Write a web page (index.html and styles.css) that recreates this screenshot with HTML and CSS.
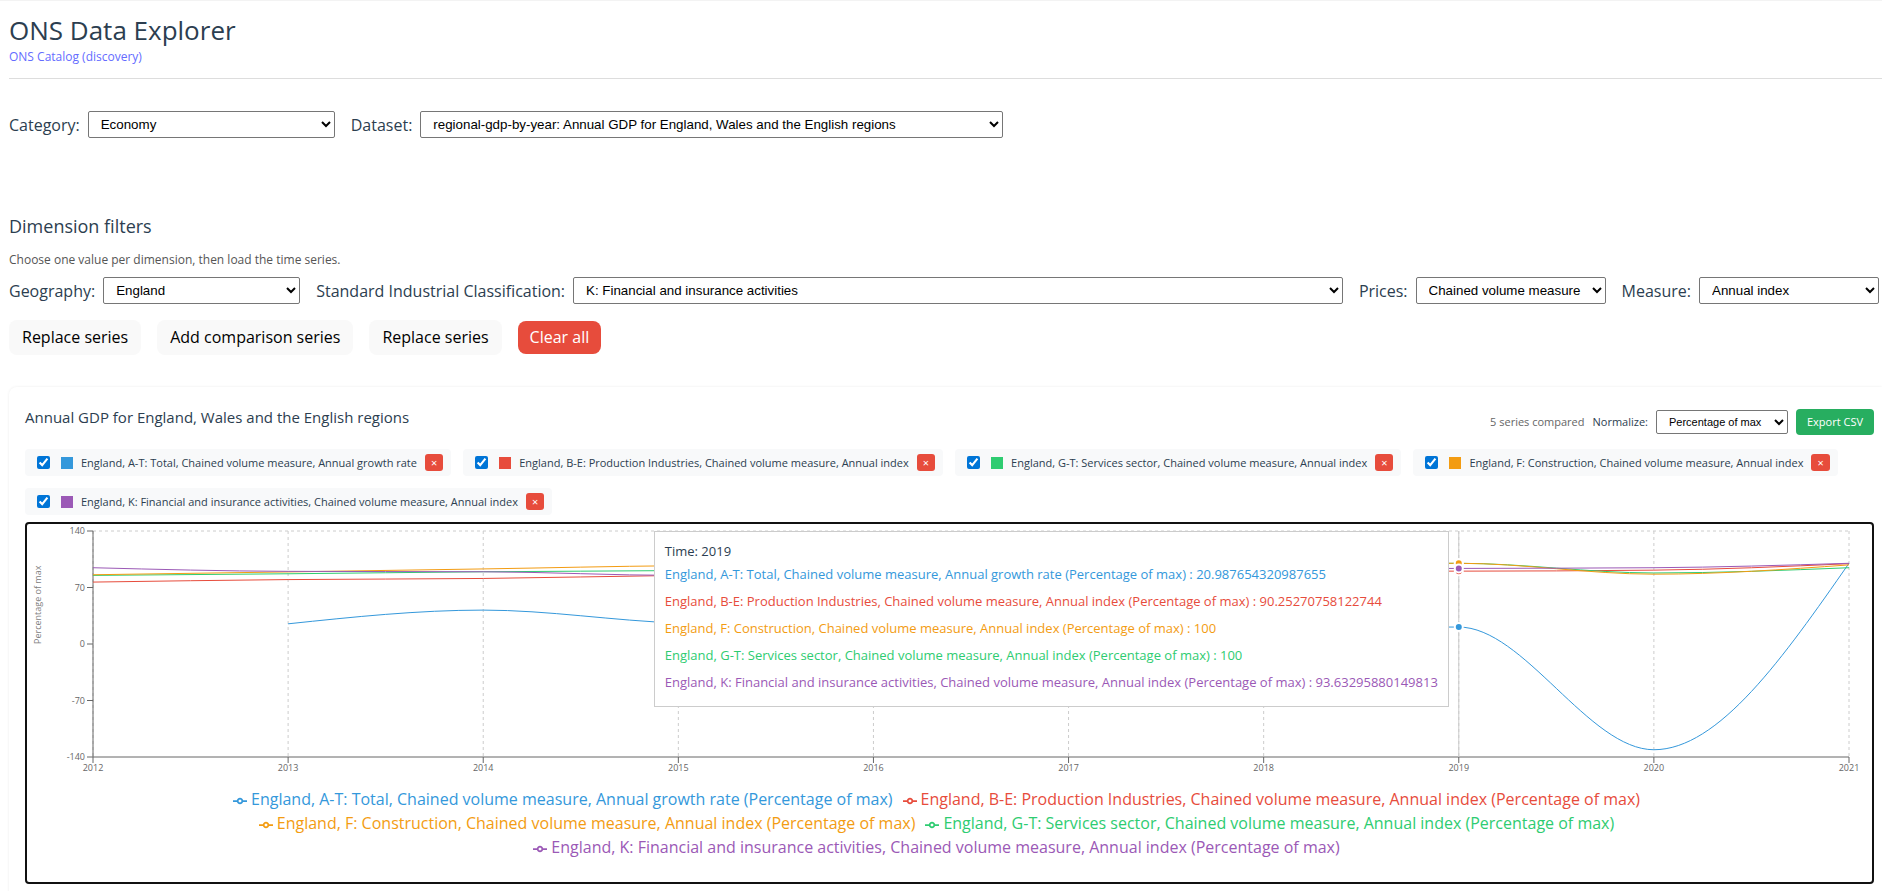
FILE: index.html
```html
<!DOCTYPE html>
<html lang="en">

<head>
    <meta charset="UTF-8">
    <meta name="viewport" content="width=device-width, initial-scale=1.0">
    <title>ONS Data Explorer</title>
    <link rel="stylesheet" href="styles.css">
</head>

<body>
    <header class="page-header">
        <h1>ONS Data Explorer</h1>
        <a href="#catalog">ONS Catalog (discovery)</a>
    </header>

    <main>
        <div class="row dataset-row">
            <label for="category">Category:</label>
            <select id="category" class="w-category">
                <option>Economy</option>
            </select>
            <label for="dataset">Dataset:</label>
            <select id="dataset" class="w-dataset">
                <option>regional-gdp-by-year: Annual GDP for England, Wales and the English regions</option>
            </select>
        </div>

        <section class="filters">
            <h2>Dimension filters</h2>
            <p class="hint">Choose one value per dimension, then load the time series.</p>
            <div class="row">
                <label for="geography">Geography:</label>
                <select id="geography" class="w-geography">
                    <option>England</option>
                </select>
                <label for="sic">Standard Industrial Classification:</label>
                <select id="sic" class="w-sic">
                    <option>K: Financial and insurance activities</option>
                </select>
                <label for="prices">Prices:</label>
                <select id="prices" class="w-prices">
                    <option>Chained volume measure</option>
                </select>
                <label for="measure">Measure:</label>
                <select id="measure" class="w-measure">
                    <option>Annual index</option>
                </select>
            </div>
            <div class="actions">
                <button type="button">Replace series</button>
                <button type="button">Add comparison series</button>
                <button type="button">Replace series</button>
                <button type="button" class="danger">Clear all</button>
            </div>
        </section>

        <section class="card">
            <div class="card-head">
                <h3>Annual GDP for England, Wales and the English regions</h3>
                <div class="tools">
                    <span class="count">5 series compared</span>
                    <label for="normalize">Normalize:</label>
                    <select id="normalize">
                        <option>Percentage of max</option>
                    </select>
                    <button type="button" class="export">Export CSV</button>
                </div>
            </div>

            <div class="chips">
                <div class="chip">
                    <input type="checkbox" id="s1" checked>
                    <span class="swatch blue"></span>
                    <label for="s1">England, A-T: Total, Chained volume measure, Annual growth rate</label>
                    <button type="button" aria-label="Remove">×</button>
                </div>
                <div class="chip">
                    <input type="checkbox" id="s2" checked>
                    <span class="swatch red"></span>
                    <label for="s2">England, B-E: Production Industries, Chained volume measure, Annual index</label>
                    <button type="button" aria-label="Remove">×</button>
                </div>
                <div class="chip">
                    <input type="checkbox" id="s3" checked>
                    <span class="swatch green"></span>
                    <label for="s3">England, G-T: Services sector, Chained volume measure, Annual index</label>
                    <button type="button" aria-label="Remove">×</button>
                </div>
                <div class="chip">
                    <input type="checkbox" id="s4" checked>
                    <span class="swatch orange"></span>
                    <label for="s4">England, F: Construction, Chained volume measure, Annual index</label>
                    <button type="button" aria-label="Remove">×</button>
                </div>
                <div class="chip">
                    <input type="checkbox" id="s5" checked>
                    <span class="swatch purple"></span>
                    <label for="s5">England, K: Financial and insurance activities, Chained volume measure, Annual index</label>
                    <button type="button" aria-label="Remove">×</button>
                </div>
            </div>

            <div class="chart">
                <svg class="plot"></svg>
                <ul class="legend"></ul>
                <div class="tooltip">
                    <p>Time: 2019</p>
                    <ul></ul>
                </div>
            </div>
        </section>
    </main>

    <script>
        let years = [2012, 2013, 2014, 2015, 2016, 2017, 2018, 2019, 2020, 2021];
        let series = [
            {
                name: 'England, A-T: Total, Chained volume measure, Annual growth rate (Percentage of max)',
                color: '#3498db', now: '20.987654320987655',
                values: [null, 25, 42, 26, 22, 24, 21, 20.99, -131, 100]
            },
            {
                name: 'England, B-E: Production Industries, Chained volume measure, Annual index (Percentage of max)',
                color: '#e74c3c', now: '90.25270758122744',
                values: [76.7, 79.8, 81.2, 85, 87, 89, 90.2, 90.25, 91.5, 99.5]
            },
            {
                name: 'England, F: Construction, Chained volume measure, Annual index (Percentage of max)',
                color: '#f39c12', now: '100',
                values: [85.8, 89.3, 93, 97, 98, 99, 99.8, 100, 86.5, 98]
            },
            {
                name: 'England, G-T: Services sector, Chained volume measure, Annual index (Percentage of max)',
                color: '#2ecc71', now: '100',
                values: [85, 87, 89.5, 91, 94, 96, 98, 100, 88, 94.5]
            },
            {
                name: 'England, K: Financial and insurance activities, Chained volume measure, Annual index (Percentage of max)',
                color: '#9b59b6', now: '93.63295880149813',
                values: [94.5, 90, 89.5, 85, 88, 91, 93, 93.63, 94.5, 100]
            }
        ];

        let plot = document.querySelector('.chart .plot');
        let tooltip = document.querySelector('.chart .tooltip');
        let legend = document.querySelector('.chart .legend');

        // green is painted under orange
        let order = [0, 1, 3, 2, 4];
        let box = { left: 66, right: 23, top: 7, height: 226 };
        let activeIndex = 7;

        function yPos(v) {
            return box.top + (140 - v) / 280 * box.height;
        }

        // monotone cubic through the points
        function curve(pts) {
            let n = pts.length;
            let s = [];
            let m = [];
            for (let i = 0; i < n - 1; i++) {
                s.push((pts[i + 1][1] - pts[i][1]) / (pts[i + 1][0] - pts[i][0]));
            }
            for (let i = 1; i < n - 1; i++) {
                let sign = Math.sign(s[i - 1]) + Math.sign(s[i]);
                m[i] = sign * Math.min(Math.abs(s[i - 1]), Math.abs(s[i]), Math.abs(s[i - 1] + s[i]) / 4);
            }
            m[0] = (3 * s[0] - m[1]) / 2;
            m[n - 1] = (3 * s[n - 2] - m[n - 2]) / 2;
            let d = `M${pts[0][0]},${pts[0][1]}`;
            for (let i = 0; i < n - 1; i++) {
                let dx = (pts[i + 1][0] - pts[i][0]) / 3;
                d += `C${pts[i][0] + dx},${pts[i][1] + dx * m[i]},${pts[i + 1][0] - dx},${pts[i + 1][1] - dx * m[i + 1]},${pts[i + 1][0]},${pts[i + 1][1]}`;
            }
            return d;
        }

        function draw() {
            let width = plot.clientWidth;
            let step = (width - box.left - box.right) / (years.length - 1);
            let x = i => box.left + i * step;
            let right = x(years.length - 1);
            let bottom = box.top + box.height;
            let out = '';

            years.forEach((year, i) => {
                out += `<line class="grid" x1="${x(i)}" y1="${box.top}" x2="${x(i)}" y2="${bottom}"/>`;
            });
            out += `<line class="grid" x1="${box.left}" y1="${box.top}" x2="${right}" y2="${box.top}"/>`;
            out += `<line class="axis" x1="${box.left}" y1="${bottom}" x2="${right}" y2="${bottom}"/>`;
            out += `<line class="axis" x1="${box.left}" y1="${box.top}" x2="${box.left}" y2="${bottom}"/>`;

            years.forEach((year, i) => {
                out += `<line class="axis" x1="${x(i)}" y1="${bottom}" x2="${x(i)}" y2="${bottom + 6}"/>`;
                out += `<text class="tick" x="${x(i)}" y="${bottom + 14}" text-anchor="middle">${year}</text>`;
            });
            [140, 70, 0, -70, -140].forEach(v => {
                out += `<line class="axis" x1="${box.left - 6}" y1="${yPos(v)}" x2="${box.left}" y2="${yPos(v)}"/>`;
                out += `<text class="tick" x="${box.left - 8}" y="${yPos(v) + 3}" text-anchor="end">${v}</text>`;
            });
            out += `<text class="axis-label" transform="translate(14 ${yPos(0)}) rotate(-90)">Percentage of max</text>`;

            out += `<line class="cursor" x1="${x(activeIndex)}" y1="${box.top}" x2="${x(activeIndex)}" y2="${bottom}"/>`;
            order.forEach(k => {
                let pts = [];
                series[k].values.forEach((v, i) => {
                    if (v !== null) pts.push([x(i), yPos(v)]);
                });
                out += `<path class="line" stroke="${series[k].color}" d="${curve(pts)}"/>`;
            });
            order.forEach(k => {
                out += `<circle class="dot" cx="${x(activeIndex)}" cy="${yPos(series[k].values[activeIndex])}" r="4" fill="${series[k].color}"/>`;
            });
            plot.innerHTML = out;

            tooltip.style.left = x(activeIndex) - tooltip.offsetWidth - 10 + 'px';
        }

        series.forEach(s => {
            legend.innerHTML += `<li style="color:${s.color}"><svg viewBox="0 0 32 32"><path d="M0,16h10.67A5.33,5.33,0,1,1,21.33,16H32M21.33,16A5.33,5.33,0,1,1,10.67,16"/></svg>${s.name}</li>`;
            tooltip.querySelector('ul').innerHTML += `<li style="color:${s.color}">${s.name} : ${s.now}</li>`;
        });

        draw();
        window.onresize = draw;
    </script>
</body>

</html>
```
FILE: styles.css
```css
* {
    box-sizing: border-box;
}

body {
    margin: 0;
    padding-left: 9px;
    border-top: 1px solid #f3f3f3;
    font-family: "Open Sans", "Noto Sans", sans-serif;
    font-size: 16px;
    line-height: 24px;
    color: #2c3e50;
    background-color: #fff;
    overflow: hidden;
}

h1,
h2,
h3,
p,
ul {
    margin: 0;
    padding: 0;
    font-weight: 400;
}

ul {
    list-style: none;
}

select {
    height: 27px;
    padding: 0 8px;
    border: 1px solid #767676;
    border-radius: 2px;
    font-family: "Liberation Sans", Arial, sans-serif;
    color: #000;
    background-color: #fff;
}

button {
    border: none;
    font-family: inherit;
    cursor: pointer;
}

.page-header {
    padding: 11px 0 12px;
    border-bottom: 1px solid #ddd;
}

.page-header h1 {
    font-size: 26px;
    line-height: 36px;
}

.page-header a {
    display: block;
    font-size: 12px;
    line-height: 18px;
    color: #646cff;
    text-decoration: none;
}

.row {
    display: flex;
    align-items: center;
}

.row label {
    margin-right: 8px;
    white-space: nowrap;
}

.row select {
    margin-right: 16px;
}

.row select:last-child {
    margin-right: 3px;
}

.dataset-row {
    padding-top: 32px;
}

.w-category {
    width: 247px;
}

.w-dataset {
    width: 583px;
}

.w-geography {
    width: 197px;
}

.w-sic {
    flex: 1;
    min-width: 0;
}

.w-prices {
    width: 190px;
}

.w-measure {
    width: 180px;
}

.filters {
    padding-top: 75px;
}

.filters h2 {
    font-size: 18px;
    line-height: 27px;
}

.filters .hint {
    padding: 11px 0 8px;
    font-size: 12px;
    line-height: 18px;
    color: #555;
}

.actions {
    display: flex;
    align-items: center;
    gap: 16px;
    margin-top: 16px;
}

.actions button {
    padding: 6px 13px;
    border-radius: 8px;
    font-size: 16px;
    line-height: 23px;
    color: #000;
    background-color: #f9f9f9;
}

.actions .danger {
    padding: 5px 12px;
    color: #fff;
    background-color: #e74c3c;
}

.card {
    margin-top: 32px;
    padding: 16px 8px 16px 16px;
    border-radius: 8px 0 0 8px;
    box-shadow: 0 0 3px rgba(0, 0, 0, 0.08);
}

.card-head {
    display: flex;
    justify-content: space-between;
    align-items: center;
    padding-top: 2px;
}

.card-head h3 {
    padding-bottom: 10px;
    font-size: 15px;
}

.tools {
    display: flex;
    align-items: center;
    gap: 8px;
    font-size: 11px;
}

.tools .count {
    color: #666;
}

.tools select {
    width: 132px;
    height: 24px;
    font-size: 11px;
}

.tools .export {
    padding: 4px 11px;
    border-radius: 4px;
    font-size: 11px;
    line-height: 18px;
    color: #fff;
    background-color: #27ae60;
}

.chips {
    display: flex;
    flex-wrap: wrap;
    gap: 12px;
    margin-top: 10px;
}

.chip {
    display: flex;
    align-items: center;
    height: 27px;
    padding: 0 8px 0 12px;
    border-radius: 4px;
    font-size: 11px;
    background-color: #f8f9fa;
}

.chip input {
    width: 13px;
    height: 13px;
    margin: 0 11px 0 0;
    accent-color: #0075d7;
}

.chip label {
    margin: 0 8px;
}

.chip button {
    padding: 0 6px;
    border-radius: 3px;
    font-size: 11px;
    line-height: 17px;
    color: #fff;
    background-color: #e74c3c;
}

.swatch {
    width: 12px;
    height: 12px;
}

.blue {
    background-color: #3498db;
}

.red {
    background-color: #e74c3c;
}

.green {
    background-color: #2ecc71;
}

.orange {
    background-color: #f39c12;
}

.purple {
    background-color: #9b59b6;
}

.chart {
    position: relative;
    margin-top: 7px;
    padding-bottom: 23px;
    border: 2px solid #111;
    border-radius: 4px;
}

.plot {
    display: block;
    width: 100%;
    height: 263px;
}

.plot .grid {
    stroke: #ccc;
    stroke-dasharray: 3 3;
}

.plot .axis {
    stroke: #666;
}

.plot .cursor {
    stroke: #ccc;
}

.plot .tick {
    font-size: 9px;
    fill: #666;
}

.plot .axis-label {
    font-size: 9px;
    fill: #808080;
}

.plot .line {
    fill: none;
    stroke-width: 1;
}

.plot .dot {
    stroke: #fff;
    stroke-width: 2;
}

.legend {
    padding-right: 16px;
    text-align: center;
}

.legend li {
    display: inline-block;
    margin-right: 10px;
}

.legend svg {
    width: 14px;
    height: 14px;
    margin-right: 4px;
    vertical-align: middle;
}

.legend path {
    fill: none;
    stroke: currentColor;
    stroke-width: 4;
}

.tooltip {
    position: absolute;
    top: 7px;
    padding: 10px;
    border: 1px solid #ccc;
    font-size: 13px;
    line-height: 19px;
    white-space: nowrap;
    background-color: #fff;
}

.tooltip li {
    padding: 4px 0;
}
```
